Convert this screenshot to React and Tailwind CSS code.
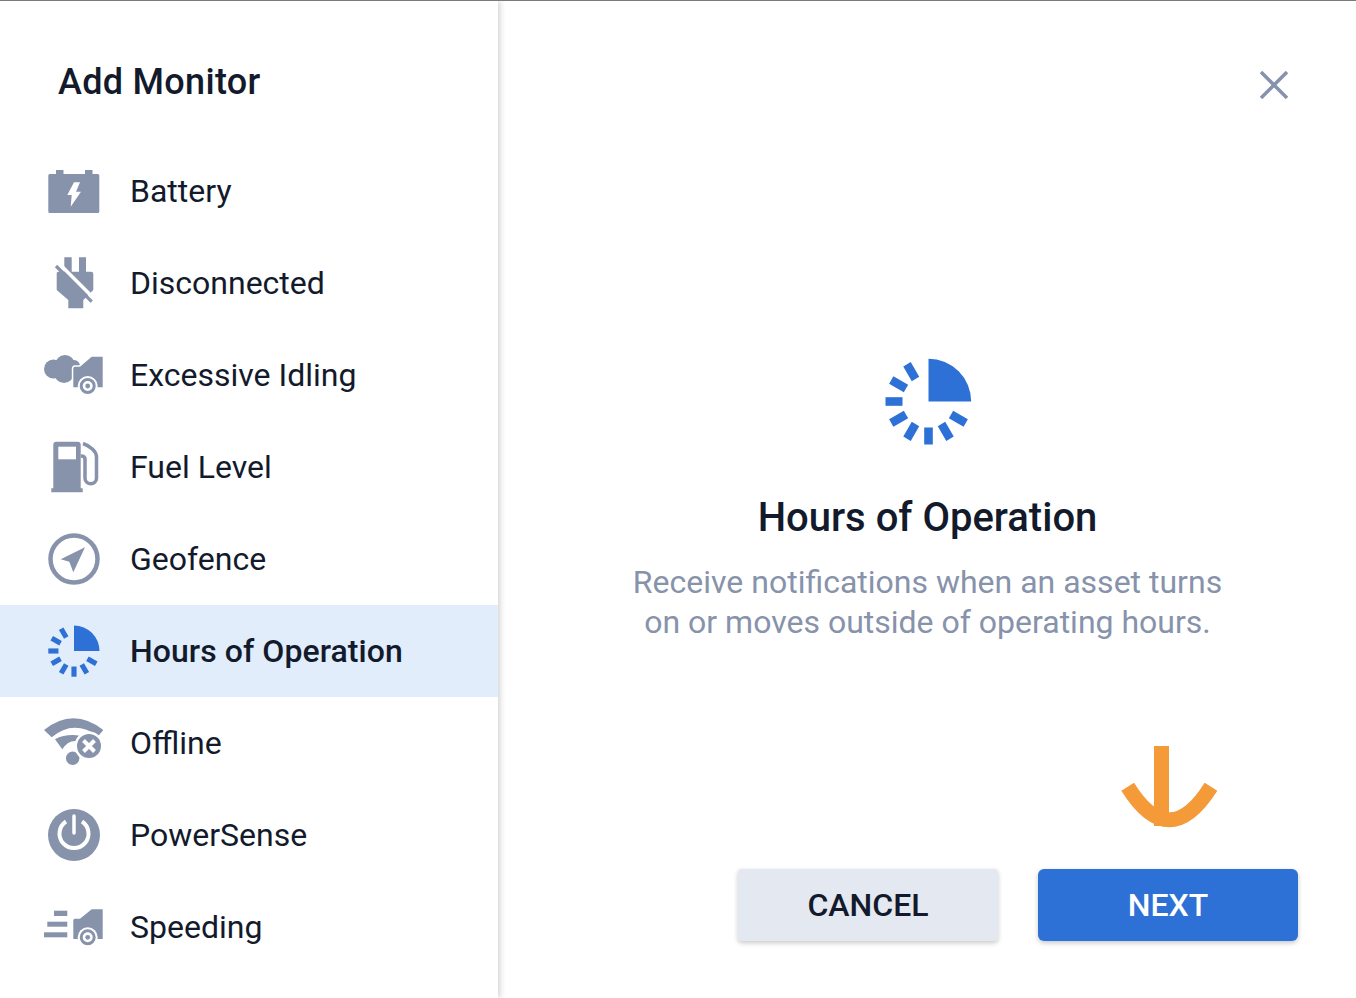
import React from "react";

const GRAY = "#8792ab";
const BLUE = "#2d70d6";

const Icon = ({ children }) => (
  <svg width="60" height="60" viewBox="0 0 60 60" fill={GRAY} className="shrink-0">
    {children}
  </svg>
);

const Wheel = ({ cy }) => (
  <>
    <circle cx="43.7" cy={cy} r="10" fill="#fff" />
    <circle cx="43.7" cy={cy} r="6.5" fill="none" stroke={GRAY} strokeWidth="3" />
    <circle cx="43.7" cy={cy} r="2.4" />
  </>
);

const BatteryIcon = () => (
  <Icon>
    <path d="M12 9h7.5v4H41V9h7.5v4h5.3a1.5 1.5 0 0 1 1.5 1.5v36a1.5 1.5 0 0 1-1.5 1.5H5.8a1.5 1.5 0 0 1-1.5-1.5v-36A1.5 1.5 0 0 1 5.8 13H12z" />
    <path d="M30 21.3L23.3 34h4.4l-1 11.7L37 30.7h-5l4-9.4z" fill="#fff" />
  </Icon>
);

const PlugIcon = () => (
  <Icon>
    <path d="M20.300 4.300h7.400v14.400h7.300V4.300h7v14.400h5a2.300 2.300 0 0 1 2.300 2.300V37l-10 10v8.300h-15V47L12.700 37V20a2 2 0 0 1 2-1.300h5.600z" />
    <path d="M15 10.500L50.500 46" stroke="#fff" strokeWidth="3.500" />
    <path d="M12 13l35.700 35.700" stroke={GRAY} strokeWidth="3.200" />
  </Icon>
);

const IdlingIcon = () => (
  <Icon>
    <circle cx="9.500" cy="24" r="9.500" />
    <circle cx="21" cy="20" r="10" />
    <circle cx="20" cy="28" r="10" />
    <circle cx="30" cy="21" r="6" />
    <path d="M58.700 11.700H47.700L36 21.700h-5a1.800 1.800 0 0 0-1.700 1.800v18.800h29.400z" stroke="#fff" strokeWidth="3" />
    <path d="M60 11.700H47.700L36 21.700h-5a1.800 1.800 0 0 0-1.700 1.800v18.800h29.400V11.700z" />
    <Wheel cy="41" />
  </Icon>
);

const FuelIcon = () => (
  <Icon>
    <path d="M12.300 4.700h21.400a3 3 0 0 1 3 3v43.600h2v4H7.300v-4h2V7.700a3 3 0 0 1 3-3z" />
    <rect x="14.300" y="9.700" width="17.700" height="12.600" fill="#fff" />
    <path d="M39 6.500C46 9 52.500 14 52.500 20v21c0 7.500-11.500 7.500-11.500 0V22c0-2-2-3-4.300-3" fill="none" stroke={GRAY} strokeWidth="3.500" />
  </Icon>
);

const GeofenceIcon = () => (
  <Icon>
    <circle cx="30" cy="30" r="23.500" fill="none" stroke={GRAY} strokeWidth="4.500" />
    <path d="M41 18.300L16.700 30.300l8.600 2.400 4 10.600z" />
  </Icon>
);

const HoursIcon = ({ size = 52 }) => (
  <svg width={size} height={size} viewBox="-43.500 -43.500 87 87" fill={BLUE} className="block shrink-0">
    <path d="M0 0V-42.700A42.700 42.700 0 0 1 42.700 0z" />
    {[120, 150, 180, 210, 240, 270, 300, 330].map((a) => (
      <rect key={a} x="-4.300" y="-43" width="8.600" height="17" transform={`rotate(${a})`} />
    ))}
  </svg>
);

const OfflineIcon = () => (
  <Icon>
    <path d="M0 17Q29.300 -6.400 59.300 17L54.300 23Q29.300 5.800 7.700 24.300z" />
    <path d="M11 26.300Q22 20.500 36 22.700L33 28Q24 27 18.300 36.300z" />
    <circle cx="28.700" cy="45.300" r="6.700" />
    <circle cx="45" cy="33" r="14.500" fill="#fff" />
    <circle cx="45" cy="33" r="12" />
    <path d="M39.500 27.500l11 11M50.500 27.500l-11 11" stroke="#fff" strokeWidth="4" />
  </Icon>
);

const PowerIcon = () => (
  <Icon>
    <circle cx="30" cy="30" r="26" />
    <path d="M22 16.500a14.500 14.500 0 1 0 16 0" fill="none" stroke="#fff" strokeWidth="4" />
    <path d="M30 11v17" stroke="#fff" strokeWidth="3.500" strokeLinecap="round" />
  </Icon>
);

const SpeedingIcon = () => (
  <Icon>
    <rect x="10" y="13.700" width="13.300" height="5.300" />
    <rect x="3.300" y="24.700" width="20" height="5" />
    <rect x="0" y="35.300" width="23.300" height="5" />
    <path d="M58.700 12.300H47.700L36 21.700h-5a1.800 1.800 0 0 0-1.700 1.800V42h29.400z" />
    <Wheel cy="40.300" />
  </Icon>
);

const monitors = [
  { name: "Battery", icon: <BatteryIcon /> },
  { name: "Disconnected", icon: <PlugIcon /> },
  { name: "Excessive Idling", icon: <IdlingIcon /> },
  { name: "Fuel Level", icon: <FuelIcon /> },
  { name: "Geofence", icon: <GeofenceIcon /> },
  {
    name: "Hours of Operation",
    active: true,
    icon: (
      <span className="flex h-[60px] w-[60px] shrink-0 items-center justify-center">
        <HoursIcon />
      </span>
    ),
  },
  { name: "Offline", icon: <OfflineIcon /> },
  { name: "PowerSense", icon: <PowerIcon /> },
  { name: "Speeding", icon: <SpeedingIcon /> },
];

const App = () => {
  return (
    <div className="flex h-[998px] w-[1356px] overflow-hidden border-t border-[#7a7a7a] bg-white font-['Roboto',sans-serif] text-[#121a2c]">
      <aside className="z-10 w-[498px] shrink-0 bg-white shadow-[2px_0_6px_rgba(0,0,0,0.18)]">
        <h1 className="pt-[58px] pb-[40px] pl-[58px] text-[36px] leading-[46px] font-medium tracking-[0.3px]">Add Monitor</h1>
        <ul>
          {monitors.map((m) => (
            <li
              key={m.name}
              className={`flex h-[92px] items-center gap-[26px] pl-[44px] text-[32px] ${
                m.active ? "bg-[#e2edfb] font-medium tracking-[0.06px]" : ""
              }`}
            >
              {m.icon}
              <span>{m.name}</span>
            </li>
          ))}
        </ul>
      </aside>

      <main className="relative flex flex-1 flex-col items-center pt-[357px]">
        <button className="absolute top-[70px] right-[68px] text-[#8792ab]">
          <svg width="28" height="28" viewBox="0 0 28 28" fill="none" stroke="currentColor" strokeWidth="3.500" className="block">
            <path d="M1 1l26 26M27 1L1 27" />
          </svg>
        </button>

        <span className="ml-[2px]">
          <HoursIcon size={87} />
        </span>
        <h2 className="mt-[48px] ml-px text-[40px] leading-[50px] font-medium">Hours of Operation</h2>
        <p className="mt-[19px] ml-px text-center text-[32px] leading-[40px] text-[#8792ab]">
          Receive notifications when an asset turns
          <br />
          on or moves outside of operating hours.
        </p>

        <svg width="100" height="90" viewBox="0 0 100 90" fill="none" stroke="#f49a38" strokeWidth="15" className="absolute top-[745px] left-[622px]">
          <path d="M41.500 0V80" />
          <path d="M7.700 40.700Q49 107 91 40.700" />
        </svg>

        <div className="mt-auto mb-[57px] flex gap-[40px] self-end pr-[58px]">
          <button className="h-[72px] w-[260px] rounded-[4px] bg-[#e4e8f1] text-[32px] font-medium shadow-[0_2px_5px_rgba(0,0,0,0.22)]">
            CANCEL
          </button>
          <button className="h-[72px] w-[260px] rounded-[6px] bg-[#2d70d6] text-[32px] font-medium text-white shadow-[0_2px_5px_rgba(0,0,0,0.22)]">
            NEXT
          </button>
        </div>
      </main>
    </div>
  );
};

export default App;
